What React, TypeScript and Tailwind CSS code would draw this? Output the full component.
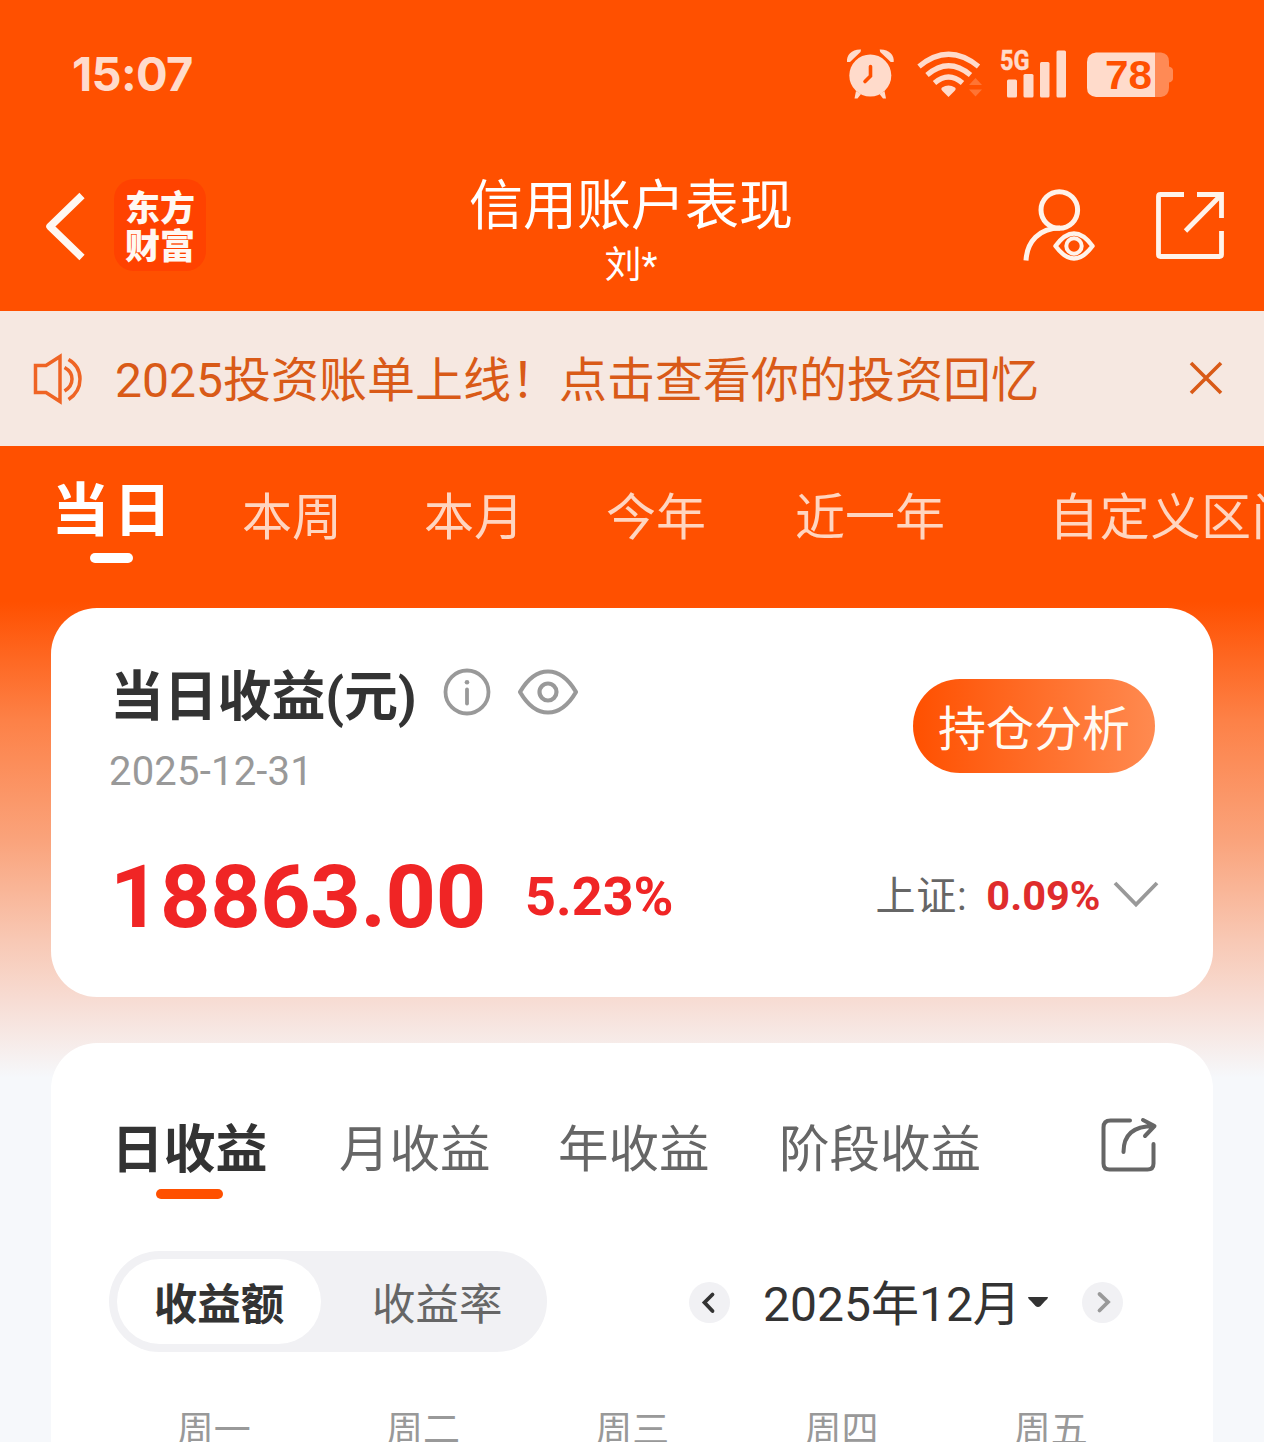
import React from "react";

function StatusIcons() {
  return (
    <svg width="340" height="60" viewBox="840 44 340 60" className="ml-[648px] mt-[44px] shrink-0">
      <g fill="#ffdbcb">
        <circle cx="870.3" cy="75.500" r="21" />
        <path d="M847 62c-.8-7 5-13 14-12.500L860.500 52 850 62z" />
        <path d="M893.700 62c.8-7-5-13-14-12.500L880.200 52l10.500 10z" />
        <path d="M856 91l5 3-3.500 4.500h-3zM884.500 91l-5 3 3.500 4.500h3z" />
        <path d="M942 87.500Q948.500 83.500 955 87.500Q956.500 89 954.500 91L948.500 97l-6-6Q940.500 89 942 87.500z" />
        <rect x="1007" y="79.500" width="10" height="18" rx="1.500" />
        <rect x="1023.500" y="74" width="10" height="23.500" rx="1.500" />
        <rect x="1040" y="62" width="9.500" height="35.500" rx="1.500" />
        <rect x="1056.500" y="50.500" width="9.500" height="47" rx="1.500" />
        <path d="M1096 52.500h59v44.500h-59q-9-1-9-9v-26q0-8.500 9-9.500z" />
      </g>
      <path d="M870.500 66.500V76l-5.500 5.500" fill="none" stroke="#ff5000" strokeWidth="3.600" strokeLinecap="round" />
      <g fill="none" stroke="#ffdbcb" strokeWidth="5.200">
        <path d="M919 66.500Q948.500 42 978.500 66.500" />
        <path d="M927 75Q948.500 56.500 970.500 75" />
        <path d="M934.500 83Q948.500 71 962.500 83" />
      </g>
      <path d="M969 85l6.500-7 6.500 7zM969 89.500l6.500 7 6.500-7z" fill="#ff7433" />
      <path d="M1155 52.500h6q8 1 8 9v5q4 1 4 4v8q0 3-4 4v5q0 8.500-8 9.500h-6z" fill="#ff8a55" />
      <text x="1000" y="70" fontFamily="Roboto" fontWeight="700" fontSize="28" textLength="29.500" lengthAdjust="spacingAndGlyphs" fill="#ffdbcb" stroke="#ffdbcb" strokeWidth=".5">5G</text>
      <text x="1105" y="89" fontFamily="Liberation Sans" fontWeight="700" fontSize="41" textLength="47" lengthAdjust="spacingAndGlyphs" fill="#ff5000">78</text>
    </svg>
  );
}

function BackIcon() {
  return (
    <svg width="42" height="74" viewBox="44 190 42 74" className="mt-[40px] ml-[44px] shrink-0" fill="none" stroke="#fff8f2" strokeWidth="7.500" strokeLinecap="butt" strokeLinejoin="round">
      <path d="M82 195.500L50 226.500l32 31" />
    </svg>
  );
}

function UserEyeIcon() {
  return (
    <svg width="76" height="76" viewBox="1021 187 76 76" className="ml-[227px] mt-[37px] shrink-0" fill="none" stroke="#fff3ea" strokeWidth="5">
      <circle cx="1059.300" cy="210" r="18.300" />
      <path d="M1026 260.500C1027 242 1039 228 1060 228" />
      <path d="M1055.500 246Q1074 221 1092.500 246Q1074 271 1055.500 246z" strokeWidth="4.500" strokeLinejoin="round" />
      <circle cx="1074" cy="246" r="7.700" strokeWidth="4" />
    </svg>
  );
}

function OpenIcon() {
  return (
    <svg width="72" height="72" viewBox="1154 190 72 72" className="ml-[57px] mt-[40px] shrink-0" fill="none" stroke="#fff3ea" strokeWidth="4.800">
      <path d="M1184 194.500h-23.500q-2 0-2 2v58q0 2 2 2h59q2 0 2-2v-23.500" />
      <path d="M1197 194.500h24.500V218M1221 195l-35.500 36" />
    </svg>
  );
}

function SpeakerIcon() {
  return (
    <svg width="52" height="52" viewBox="32 353 52 52" className="ml-[32px] shrink-0" fill="none" stroke="#ef6424" strokeWidth="3.500">
      <path d="M35.500 365.500H46L60 356.500v45L46 392.500H35.500z" />
      <path d="M64.500 367.500q7.500 4 7.500 11.500t-7.500 12M68.500 359.500Q80 366 80 379t-11.500 20.500" />
    </svg>
  );
}

const rangeTabs = [
  { label: "本周", cls: "ml-[75px] w-[102px]" },
  { label: "本月", cls: "ml-[80px] w-[102px]" },
  { label: "今年", cls: "ml-[80px] w-[102px]" },
  { label: "近一年", cls: "ml-[87px] w-[152px]" },
  { label: "自定义区间", cls: "ml-[102px] w-[256px] tracking-[0.700px]" },
];

const incomeTabs = [
  { label: "月收益", cls: "ml-[72px] w-[152px]" },
  { label: "年收益", cls: "ml-[67px] w-[152px]" },
  { label: "阶段收益", cls: "ml-[69px] w-[204px]" },
];

const weekdays = ["周一", "周二", "周三", "周四", "周五"];

export default function App() {
  return (
    <div className="h-[1442px] w-[1264px] overflow-hidden whitespace-nowrap bg-[#f6f8fb] font-['Roboto','Noto_Sans_CJK_SC',sans-serif]">
      <div className="h-[1080px] bg-[linear-gradient(180deg,#ff5000_0px,#ff5000_602px,#fd8147_720px,#faa37b_840px,#f8c8b4_940px,#f7dcd3_1000px,#f6f8fb_1078px)]">
        <header className="h-[311px]">
          <div className="flex h-[150px] items-start">
            <div className="ml-[72px] mt-[44px] w-[120px] font-['Inter'] text-[47px] font-bold leading-[60px] tracking-[-0.700px] text-[#ffdbcb]">15:07</div>
            <StatusIcons />
          </div>
          <div className="flex h-[161px] items-start">
            <BackIcon />
            <div className="ml-[28px] mt-[29px] flex h-[92px] w-[92px] shrink-0 flex-col items-center rounded-[20px] bg-[#ff4200] pt-[12px] text-[35px] font-black leading-[38px] text-[#fff8f2]">
              <span>东方</span>
              <span>财富</span>
            </div>
            <div className="ml-[262px] mt-[27px] flex w-[326px] shrink-0 flex-col items-center text-white">
              <h1 className="text-[54px] leading-[60px]">信用账户表现</h1>
              <p className="mt-[1px] text-[37px] leading-[56px]">刘*</p>
            </div>
            <UserEyeIcon />
            <OpenIcon />
          </div>
        </header>

        <section className="flex h-[135px] items-center bg-[#f6e8e1]">
          <SpeakerIcon />
          <p className="ml-[31px] mt-[5px] w-[926px] text-[48px] leading-[60px] text-[#d95a17]">2025投资账单上线！点击查看你的投资回忆</p>
          <svg width="36" height="36" viewBox="0 0 36 36" className="ml-[147px] -mt-px shrink-0" stroke="#d95a17" strokeWidth="3.600">
            <path d="M3 3l30 30M33 3L3 33" />
          </svg>
        </section>

        <nav className="flex h-[162px] items-start overflow-hidden text-[50px] leading-[60px] text-[#ffd5c0]">
          <div className="ml-[53px] mt-[35px] flex w-[117px] shrink-0 flex-col items-center">
            <span className="pl-[4px] text-[58px] font-bold tracking-[4px] text-white">当日</span>
            <i className="mt-[12px] h-[10px] w-[43px] rounded-full bg-white" />
          </div>
          <div className="-ml-[3px] flex">
            {rangeTabs.map((t) => (
              <span key={t.label} className={"mt-[42px] shrink-0 " + t.cls}>{t.label}</span>
            ))}
          </div>
        </nav>

        <section className="mx-[51px] h-[389px] rounded-[46px] bg-white px-[59px]">
          <div className="flex h-[230px] items-start">
            <div className="w-[470px] pt-[60px]">
              <div className="flex items-center">
                <h2 className="w-[308px] text-[54px] font-bold leading-[60px] tracking-[-0.200px] text-[#333]">当日收益(元)</h2>
                <svg width="50" height="50" viewBox="0 0 50 50" className="-mt-[12px] ml-[24px] shrink-0" fill="none" stroke="#999" strokeWidth="3.800">
                  <circle cx="25" cy="25" r="21.500" />
                  <path d="M25 22.500v14" strokeLinecap="round" />
                  <circle cx="25" cy="15.300" r="2.300" fill="#999" stroke="none" />
                </svg>
                <svg width="62" height="50" viewBox="0 0 62 50" className="-mt-[12px] ml-[25px] shrink-0" fill="none" stroke="#999" strokeWidth="4.200" strokeLinejoin="round">
                  <path d="M3 25Q15 4.500 31 4.500T59 25Q47 45.500 31 45.500T3 25z" />
                  <circle cx="31" cy="25" r="8.500" />
                </svg>
              </div>
              <p className="mt-[20px] -ml-px text-[40px] leading-[48px] tracking-[0.200px] text-[#999]">2025-12-31</p>
            </div>
            <button className="ml-[333px] mt-[71px] flex h-[94px] w-[242px] shrink-0 translate-x-px items-start justify-center rounded-full bg-[linear-gradient(90deg,#ff5000,#ff8a50)] pt-[7px] text-[48px] leading-[88px] text-[#fffaf2]">持仓分析</button>
          </div>
          <div className="flex h-[116px] items-center">
            <strong className="mt-[2px] w-[374px] text-[88px] font-bold leading-[116px] tracking-[-0.400px] text-[#f02525]">18863.00</strong>
            <strong className="ml-[41px] mt-[2px] w-[150px] text-[54px] font-bold leading-[116px] text-[#f02525]">5.23%</strong>
            <span className="ml-[202px] mt-[2px] w-[94px] text-[40px] leading-[116px] tracking-[0.700px] text-[#666]">上证:</span>
            <strong className="ml-[19px] w-[114px] text-[41.500px] font-bold leading-[116px] text-[#df2c2c]">0.09%</strong>
            <svg width="46" height="28" viewBox="0 0 46 28" className="-mt-[3px] ml-[13px] shrink-0" fill="none" stroke="#999" strokeWidth="3.800">
              <path d="M2 2l21 21.500L44 2" />
            </svg>
          </div>
        </section>
      </div>

      <section className="relative mx-[51px] -mt-[37px] h-[399px] rounded-t-[46px] bg-white">
        <div className="flex h-[208px] items-start pl-[61px] pt-[78px] text-[50.500px] leading-[60px] text-[#666]">
          <div className="flex w-[155px] shrink-0 flex-col items-center">
            <span className="text-[52px] font-bold text-[#333]">日收益</span>
            <i className="mt-[8px] h-[10px] w-[67px] rounded-full bg-[#ff5000]" />
          </div>
          {incomeTabs.map((t) => (
            <span key={t.label} className={"-mt-px shrink-0 " + t.cls}>{t.label}</span>
          ))}
          <svg width="58" height="58" viewBox="1100 1116 58 58" className="ml-[117px] -mt-[5px] shrink-0" fill="none" stroke="#666" strokeWidth="4" strokeLinecap="round" strokeLinejoin="round">
            <path d="M1130 1120.500h-19.500q-7 0-7 7v36q0 6 6 6h38q6 0 6-6V1144" />
            <path d="M1123.500 1152c0-16 9-26 30-26M1143 1120l11.500 6-9.500 10" />
          </svg>
        </div>
        <div className="flex h-[101px] items-center pl-[58px]">
          <div className="flex h-[101px] w-[438px] shrink-0 items-center rounded-full bg-[#f1f1f4] pl-[8px] text-[43.500px] leading-[85px]">
            <span className="h-[85px] w-[204px] rounded-full bg-white pt-[5px] text-center font-bold leading-[83px] text-[#333]">收益额</span>
            <span className="ml-[51px] mt-[8px] text-[#666]">收益率</span>
          </div>
          <svg width="41" height="41" viewBox="0 0 41 41" className="ml-[142px] mt-[2px] shrink-0" fill="none">
            <circle cx="20.500" cy="20.500" r="20.500" fill="#f1f1f4" />
            <path d="M23.500 12.500l-8 8 8 8.500" stroke="#333" strokeWidth="3.800" strokeLinecap="round" />
          </svg>
          <span className="ml-[33px] mt-[7px] w-[257px] text-[48px] leading-[60px] text-[#333]">2025年12月</span>
          <svg width="20" height="11" viewBox="0 0 20 11" className="ml-[8px] mt-[2px] shrink-0" fill="#333">
            <path d="M0 0h20Q20 2 17 4l-4.500 5q-2.500 2-5 0L3 4Q0 2 0 0z" />
          </svg>
          <svg width="41" height="41" viewBox="0 0 41 41" className="ml-[34px] mt-[2px] shrink-0" fill="none">
            <circle cx="20.500" cy="20.500" r="20.500" fill="#f1f1f4" />
            <path d="M17.500 12l8.500 8-8.500 8.500" stroke="#999" strokeWidth="3.800" strokeLinecap="round" />
          </svg>
        </div>
        <div className="flex pl-[58px] pt-[53px]">
          {weekdays.map((d) => (
            <span key={d} className="w-[209.300px] shrink-0 text-center text-[37px] leading-[52px] text-[#999]">{d}</span>
          ))}
        </div>
      </section>
    </div>
  );
}
